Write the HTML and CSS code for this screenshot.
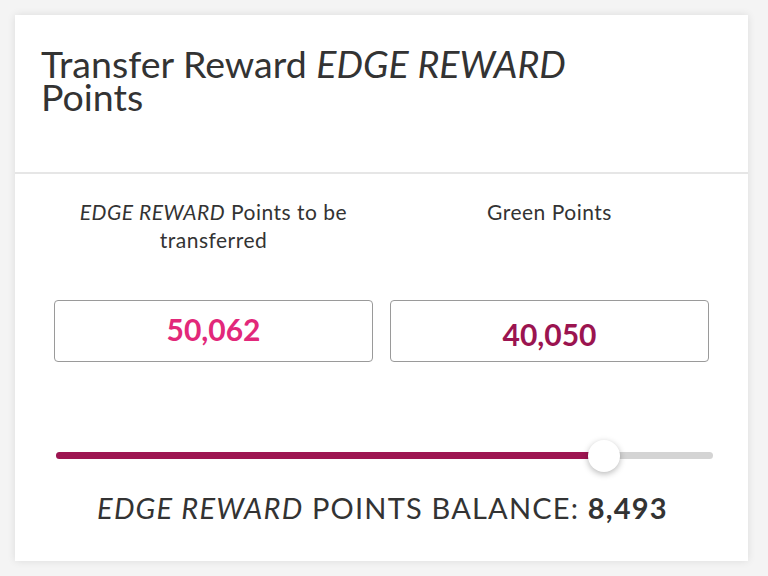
FILE: index.html
```html
<!DOCTYPE html>
<html>
<head>
<meta charset="utf-8">
<link rel="stylesheet" href="styles.css">
</head>
<body>
<div class="card">
  <div class="card-header">
    <h1 class="title">Transfer Reward <em>EDGE REWARD</em> Points</h1>
  </div>
  <div class="card-body">
    <div class="columns">
      <div class="col">
        <div class="label"><em>EDGE REWARD</em> Points to be transferred</div>
        <div class="field"><span class="value value-pink">50,062</span></div>
      </div>
      <div class="col">
        <div class="label">Green Points</div>
        <div class="field"><span class="value value-maroon">40,050</span></div>
      </div>
    </div>
    <div class="slider">
      <div class="track">
        <div class="fill" style="width: 83.4%"></div>
        <div class="thumb" style="left: 83.4%"></div>
      </div>
    </div>
    <div class="balance"><em>EDGE REWARD</em> POINTS BALANCE: <strong>8,493</strong></div>
  </div>
</div>
</body>
</html>
```

FILE: styles.css
```css
* { box-sizing: border-box; }
html, body { margin: 0; padding: 0; }
body {
  background: #f4f4f4;
  font-family: Lato, "Open Sans", sans-serif;
  color: #333;
  padding: 15px 20px 15px 15px;
}
.card {
  width: 733px;
  height: 546px;
  background: #fff;
  box-shadow: 0 0 8px rgba(0,0,0,0.10);
  display: flex;
  flex-direction: column;
}
.card-header {
  height: 159px;
  border-bottom: 2px solid #e6e6e6;
  padding: 32px 27px 0 26px;
}
.title {
  margin: 0;
  font-weight: 400;
  font-size: 37.5px;
  line-height: 33px;
  color: #333;
  width: 580px;
}
.title em { font-style: italic; }
.card-body {
  padding: 24px 39px 0 39px;
  display: flex;
  flex-direction: column;
}
.columns {
  display: flex;
  gap: 17px;
}
.col {
  flex: 1;
  display: flex;
  flex-direction: column;
}
.label {
  height: 102px;
  text-align: center;
  font-size: 21px;
  letter-spacing: 0.5px;
  line-height: 28px;
  color: #333;
  padding: 0 14px;
}
.field {
  height: 62px;
  border: 1.5px solid #9a9a9a;
  border-radius: 4px;
  display: flex;
  align-items: center;
  justify-content: center;
}
.value {
  font-weight: 700;
  font-size: 30px;
}
.value-pink { color: #e2287a; padding-bottom: 4px; }
.value-maroon { color: #9b1450; padding-top: 6px; }
.slider {
  margin-top: 90px;
  margin-left: 2px;
  margin-right: -4px;
}
.track {
  position: relative;
  height: 7px;
  background: #d4d4d4;
  border-radius: 4px;
}
.fill {
  height: 100%;
  background: #9e1551;
  border-radius: 4px;
}
.thumb {
  position: absolute;
  top: 50%;
  width: 32px;
  height: 32px;
  margin-left: -16px;
  margin-top: -16px;
  border-radius: 50%;
  background: #fff;
  box-shadow: 0 2px 6px rgba(0,0,0,0.28);
}
.balance {
  margin-top: 31px;
  text-align: center;
  font-size: 29px;
  letter-spacing: 1.2px;
  color: #333;
  margin-left: 2px;
}
.balance strong { font-weight: 700; }
```
